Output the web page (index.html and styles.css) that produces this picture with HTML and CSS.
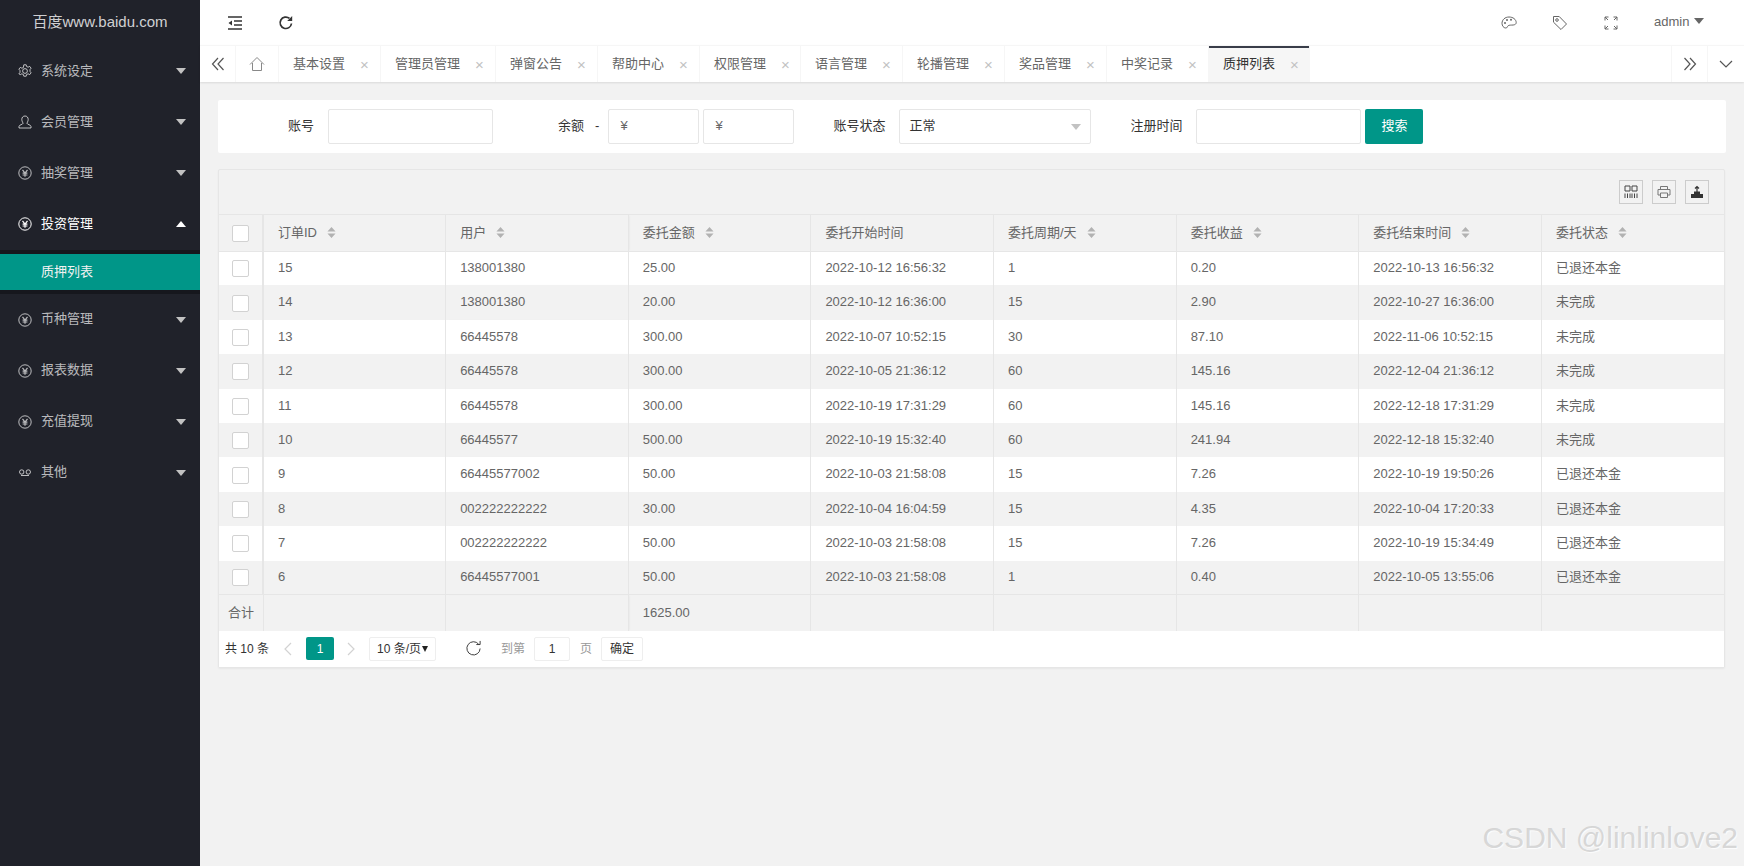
FILE: index.html
```html
<!DOCTYPE html>
<html lang="zh-CN">
<head>
<meta charset="utf-8">
<title>质押列表</title>
<link rel="stylesheet" href="styles.css">
</head>
<body>
<svg class="defs" width="0" height="0" aria-hidden="true">
  <symbol id="i-rmb" viewBox="0 0 14 14">
    <circle cx="7" cy="7" r="6.2" fill="none" stroke="currentColor" stroke-width="1"/>
    <path d="M4.5 3.8 7 7l2.5-3.2M4.6 7.2h4.8M4.6 9h4.8M7 7v3.8" fill="none" stroke="currentColor" stroke-width="1.2"/>
  </symbol>
  <symbol id="i-sort" viewBox="0 0 10 14"><path d="M5 1 9.5 6H.5zM5 13 .5 8h9z" fill="#b2b2b2"/></symbol>
</svg>
<div class="app">
  <aside class="side">
    <div class="logo">百度www.baidu.com</div>
    <nav class="nav">
      <a class="nav-item"><svg class="nav-ic" viewBox="0 0 14 14"><circle cx="7" cy="7" r="2.4" fill="none" stroke="currentColor"/><path d="M5.8.8h2.4l.4 1.7 1.5.7 1.6-.8 1.4 1.8-1.1 1.4v1.8l1.1 1.4-1.4 1.8-1.6-.8-1.5.7-.4 1.7H5.800l-.4-1.700-1.500-.7-1.600.8L.9 9.800 2 8.400V6.600L.9 5.200l1.400-1.800 1.600.8 1.500-.7z" fill="none" stroke="currentColor"/></svg><span>系统设定</span><i class="caret"></i></a>
      <a class="nav-item"><svg class="nav-ic" viewBox="0 0 14 14"><path d="M7 1c-2 0-3.200 1.500-3.200 3.400S5 7.700 5 8.400c0 1-4 1.400-4 3.100V13h12v-1.500c0-1.700-4-2.100-4-3.100 0-.7 1.200-2.100 1.200-4S9 1 7 1z" fill="none" stroke="currentColor"/></svg><span>会员管理</span><i class="caret"></i></a>
      <a class="nav-item"><svg class="nav-ic"><use href="#i-rmb"/></svg><span>抽奖管理</span><i class="caret"></i></a>
      <a class="nav-item open"><svg class="nav-ic"><use href="#i-rmb"/></svg><span>投资管理</span><i class="caret up"></i></a>
      <div class="sub"><a class="sub-item">质押列表</a></div>
      <a class="nav-item"><svg class="nav-ic"><use href="#i-rmb"/></svg><span>币种管理</span><i class="caret"></i></a>
      <a class="nav-item"><svg class="nav-ic"><use href="#i-rmb"/></svg><span>报表数据</span><i class="caret"></i></a>
      <a class="nav-item"><svg class="nav-ic"><use href="#i-rmb"/></svg><span>充值提现</span><i class="caret"></i></a>
      <a class="nav-item"><svg class="nav-ic" viewBox="0 0 14 14"><circle cx="3.700" cy="6" r="2.200" fill="none" stroke="currentColor"/><circle cx="10.300" cy="6" r="2.200" fill="none" stroke="currentColor"/><path d="M3 9.500h8" stroke="currentColor"/></svg><span>其他</span><i class="caret"></i></a>
    </nav>
  </aside>
  <main class="main">
    <header class="top">
      <div class="top-group">
        <span class="top-btn"><svg class="ic-16" viewBox="0 0 16 16"><path d="M1 2h14M7 6h8M7 10h8M1 14h14" fill="none" stroke="#333" stroke-width="1.300"/><path d="M5 5.500 1.500 8 5 10.500z" fill="#333"/></svg></span>
        <span class="top-btn"><svg class="ic-16" viewBox="0 0 16 16"><path d="M13.500 8.500A5.700 5.700 0 1 1 11.500 3.400" fill="none" stroke="#333" stroke-width="1.700"/><path d="M14.200 1v5h-5z" fill="#333"/></svg></span>
      </div>
      <div class="top-group">
        <span class="top-btn"><svg class="ic-16" viewBox="0 0 16 16"><path d="M8 2C4 2 1 4.800 1 8.300c0 2.400 1.500 4.700 3.800 4.700 1.600 0 1.400-1.500 2.400-2.300 1-.8 3-.5 5-.7 1.800-.2 3-1 3-2.400C15.200 4.400 12 2 8 2z" fill="none" stroke="#666"/><circle cx="4" cy="8" r="1" fill="#666"/><circle cx="6" cy="5" r="1" fill="#666"/><circle cx="10" cy="4.800" r="1" fill="#666"/></svg></span>
        <span class="top-btn"><svg class="ic-16" viewBox="0 0 16 16"><path d="M1.500 1.500h5.700l7.300 7.500-5.500 5.500L1.500 7.200z" fill="none" stroke="#666"/><circle cx="5" cy="5" r="1.300" fill="none" stroke="#666"/></svg></span>
        <span class="top-btn"><svg class="ic-16" viewBox="0 0 16 16"><path d="M2 5.500V2h3.500M10.500 2H14v3.500M2 10.500V14h3.500M14 10.500V14h-3.500M2 2l3 3M14 2l-3 3M2 14l3-3M14 14l-3-3" fill="none" stroke="#666"/></svg></span>
        <span class="user">admin<i class="caret dark"></i></span>
      </div>
    </header>
    <div class="tabs">
      <span class="tab-ctl w35"><svg class="ic-14" viewBox="0 0 14 14"><path d="M7 1 1.500 7 7 13M12.500 1 7 7l5.500 6" fill="none" stroke="#555" stroke-width="1.200"/></svg></span>
      <span class="tab-ctl w43"><svg class="ic-16" viewBox="0 0 16 16"><path d="M1 8.500 8 1.500l7 7M3.500 7v7.500h9V7" fill="none" stroke="#888"/></svg></span>
      <span class="tab w102">基本设置<i class="x">×</i></span>
      <span class="tab w115">管理员管理<i class="x">×</i></span>
      <span class="tab w102">弹窗公告<i class="x">×</i></span>
      <span class="tab w102">帮助中心<i class="x">×</i></span>
      <span class="tab w101">权限管理<i class="x">×</i></span>
      <span class="tab w102">语言管理<i class="x">×</i></span>
      <span class="tab w102">轮播管理<i class="x">×</i></span>
      <span class="tab w102">奖品管理<i class="x">×</i></span>
      <span class="tab w102">中奖记录<i class="x">×</i></span>
      <span class="tab w101 active">质押列表<i class="x">×</i></span>
      <span class="tab-fill"></span>
      <span class="tab-ctl w37 bl"><svg class="ic-14" viewBox="0 0 14 14"><path d="M1.500 1 7 7l-5.500 6M7 1l5.500 6L7 13" fill="none" stroke="#555" stroke-width="1.200"/></svg></span>
      <span class="tab-ctl w36"><svg class="ic-14" viewBox="0 0 14 14"><path d="M1 4l6 6 6-6" fill="none" stroke="#555" stroke-width="1.200"/></svg></span>
    </div>
    <div class="content">
      <form class="search">
        <label class="lbl l-acct">账号</label><span class="inp w165"></span>
        <label class="lbl l-bal">余额</label><span class="dash">-</span>
        <span class="inp w91 yen">¥</span><span class="inp w91 yen g4">¥</span>
        <label class="lbl l-stat">账号状态</label>
        <span class="inp sel">正常<i class="caret grey"></i></span>
        <label class="lbl l-reg">注册时间</label><span class="inp w165"></span>
        <span class="btn">搜索</span>
      </form>
      <section class="card">
        <div class="toolbar">
          <span class="tool"><svg class="ic-14" viewBox="0 0 14 14"><path d="M1 1h5v5H1zM8 1h5v5H8zM1 8.500V13M3.500 8.500V13M6 8.500V13M8 8.500V13M10.500 8.500V13M13 8.500V13" fill="none" stroke="#444"/></svg></span>
          <span class="tool"><svg class="ic-14" viewBox="0 0 14 14"><path d="M3.500 4V1.500h7V4M3.500 10H1V4.500h12V10h-2.500M3.500 8h7v4.500h-7z" fill="none" stroke="#777"/></svg></span>
          <span class="tool"><svg class="ic-14" viewBox="0 0 14 14"><path d="M1 9h12v4H1zM4 6.500h6V9H4z" fill="#333"/><path d="M7 7V1.800M5 3.500l2-2 2 2" fill="none" stroke="#333" stroke-width="1.200"/></svg></span>
        </div>
        <table class="grid">
          <colgroup><col class="c-chk"><col span="8"></colgroup>
          <thead><tr>
            <th class="chk"><i class="box"></i></th>
            <th>订单ID<svg class="sort"><use href="#i-sort"/></svg></th>
            <th class="shade">用户<svg class="sort"><use href="#i-sort"/></svg></th>
            <th>委托金额<svg class="sort"><use href="#i-sort"/></svg></th>
            <th>委托开始时间</th>
            <th>委托周期/天<svg class="sort"><use href="#i-sort"/></svg></th>
            <th>委托收益<svg class="sort"><use href="#i-sort"/></svg></th>
            <th>委托结束时间<svg class="sort"><use href="#i-sort"/></svg></th>
            <th>委托状态<svg class="sort"><use href="#i-sort"/></svg></th>
          </tr></thead>
          <tbody>
            <tr><td class="chk"><i class="box"></i></td><td>15</td><td class="shade">138001380</td><td>25.00</td><td>2022-10-12 16:56:32</td><td>1</td><td>0.20</td><td>2022-10-13 16:56:32</td><td>已退还本金</td></tr>
            <tr><td class="chk"><i class="box"></i></td><td>14</td><td class="shade">138001380</td><td>20.00</td><td>2022-10-12 16:36:00</td><td>15</td><td>2.90</td><td>2022-10-27 16:36:00</td><td>未完成</td></tr>
            <tr><td class="chk"><i class="box"></i></td><td>13</td><td class="shade">66445578</td><td>300.00</td><td>2022-10-07 10:52:15</td><td>30</td><td>87.10</td><td>2022-11-06 10:52:15</td><td>未完成</td></tr>
            <tr><td class="chk"><i class="box"></i></td><td>12</td><td class="shade">66445578</td><td>300.00</td><td>2022-10-05 21:36:12</td><td>60</td><td>145.16</td><td>2022-12-04 21:36:12</td><td>未完成</td></tr>
            <tr><td class="chk"><i class="box"></i></td><td>11</td><td class="shade">66445578</td><td>300.00</td><td>2022-10-19 17:31:29</td><td>60</td><td>145.16</td><td>2022-12-18 17:31:29</td><td>未完成</td></tr>
            <tr><td class="chk"><i class="box"></i></td><td>10</td><td class="shade">66445577</td><td>500.00</td><td>2022-10-19 15:32:40</td><td>60</td><td>241.94</td><td>2022-12-18 15:32:40</td><td>未完成</td></tr>
            <tr><td class="chk"><i class="box"></i></td><td>9</td><td class="shade">66445577002</td><td>50.00</td><td>2022-10-03 21:58:08</td><td>15</td><td>7.26</td><td>2022-10-19 19:50:26</td><td>已退还本金</td></tr>
            <tr><td class="chk"><i class="box"></i></td><td>8</td><td class="shade">002222222222</td><td>30.00</td><td>2022-10-04 16:04:59</td><td>15</td><td>4.35</td><td>2022-10-04 17:20:33</td><td>已退还本金</td></tr>
            <tr><td class="chk"><i class="box"></i></td><td>7</td><td class="shade">002222222222</td><td>50.00</td><td>2022-10-03 21:58:08</td><td>15</td><td>7.26</td><td>2022-10-19 15:34:49</td><td>已退还本金</td></tr>
            <tr><td class="chk"><i class="box"></i></td><td>6</td><td class="shade">66445577001</td><td>50.00</td><td>2022-10-03 21:58:08</td><td>1</td><td>0.40</td><td>2022-10-05 13:55:06</td><td>已退还本金</td></tr>
          </tbody>
          <tfoot><tr><td class="sum">合计</td><td></td><td class="shade"></td><td>1625.00</td><td></td><td></td><td></td><td></td><td></td></tr></tfoot>
        </table>
        <div class="pager">
          <span class="count">共 10 条</span>
          <svg class="arrow" viewBox="0 0 10 14"><path d="M8 1 2 7l6 6" fill="none" stroke="#d2d2d2" stroke-width="1.200"/></svg>
          <span class="cur">1</span>
          <svg class="arrow" viewBox="0 0 10 14"><path d="m2 1 6 6-6 6" fill="none" stroke="#d2d2d2" stroke-width="1.200"/></svg>
          <span class="limit">10 条/页<i class="caret black"></i></span>
          <svg class="reload" viewBox="0 0 18 18"><path d="M14.500 4.500A7 7 0 1 0 16 9" fill="none" stroke="#333"/><path d="M12 4.800h4V1" fill="none" stroke="#333"/></svg>
          <span class="muted goto">到第</span><span class="jump">1</span><span class="muted page">页</span><span class="ok">确定</span>
        </div>
      </section>
    </div>
  </main>
  <div class="mark">CSDN @linlinlove2</div>
</div>
</body>
</html>
```

FILE: styles.css
```css
* { box-sizing: border-box; }
html, body { margin: 0; height: 100%; overflow: hidden; }
body { font: 13px/1.4 "Liberation Sans", "Noto Sans CJK SC", sans-serif; color: #666; background: #f2f2f2; }
i { font-style: normal; }
.defs { position: absolute; }
.app { display: grid; grid-template-columns: 200px 1fr; height: 866px; position: relative; }

.side { background: #20222a; color: rgba(255,255,255,.7); }
.logo { height: 45.500px; line-height: 44px; text-align: center; font-size: 15px; color: rgba(255,255,255,.8); }
.nav-item { display: flex; align-items: center; height: 51px; padding-left: 18px; padding-right: 14px; }
.nav-item span { flex: 1; margin-left: 9px; }
.nav-item.open { color: #fff; }
.nav-ic { width: 14px; height: 14px; }
.caret { width: 0; height: 0; border: 5.500px solid transparent; border-top: 6px solid #c2c2c2; border-bottom: 0; display: inline-block; }
.caret.up { border-top: 0; border-bottom: 6px solid #fff; }
.caret.dark { border-top-color: #666; margin-left: 5px; vertical-align: 2px; }
.caret.grey { border-top-color: #c2c2c2; }
.caret.black { border: 3.500px solid transparent; border-top: 6px solid #222; border-bottom: 0; }
.sub { background: rgba(0,0,0,.3); padding: 4px 0; }
.sub-item { display: block; height: 36.500px; line-height: 36px; padding-left: 41px; background: #009688; color: #f2f2f2; }

.main { min-width: 0; display: flex; flex-direction: column; }
.top { height: 45px; background: #fff; display: flex; justify-content: space-between; padding-left: 9px; }
.top-group { display: flex; align-items: center; }
.top-btn { width: 51px; display: flex; justify-content: center; }
.ic-16 { width: 16px; height: 16px; }
.ic-14 { width: 14px; height: 14px; }
.user { width: 108px; padding-left: 18px; }

.tabs { height: 37px; background: #fff; display: flex; border-top: 1px solid #f6f6f6; box-shadow: 0 1px 2px rgba(0,0,0,.1); position: relative; }
.tab-ctl { display: flex; align-items: center; justify-content: center; border-right: 1px solid #f6f6f6; flex: none; }
.tab-ctl.bl { border-left: 1px solid #f6f6f6; }
.tab-ctl:last-child { border-right: 0; }
.w35 { width: 36px; } .w43 { width: 43px; } .w37 { width: 37px; } .w36 { width: 36px; }
.tab { display: flex; align-items: center; flex: none; padding-left: 14px; border-right: 1px solid #f6f6f6; }
.w102 { width: 102px; } .w115 { width: 115px; } .w101 { width: 101px; }
.tab-fill { flex: 1; }
.x { margin-left: 15px; color: #c2c2c2; font-size: 15px; line-height: 1; }
.tab.active { background: #f6f6f6; color: #333; box-shadow: inset 0 2px 0 #393d49; }

.content { flex: 1; padding: 18px 18px 0; }
.search { display: flex; align-items: center; height: 53px; background: #fff; border-radius: 2px; color: #333; }
.lbl { flex: none; }
.l-acct { margin-left: 70px; margin-right: 14px; }
.l-bal { margin-left: 65px; }
.dash { margin: 0 9px 0 11px; }
.l-stat { margin-left: 39px; margin-right: 14px; }
.l-reg { margin-left: 39px; margin-right: 14px; }
.inp { height: 35px; border: 1px solid #e6e6e6; border-radius: 2px; display: flex; align-items: center; position: relative; flex: none; background: #fff; }
.w165 { width: 165px; }
.w91 { width: 91px; }
.g4 { margin-left: 4px; }
.yen { padding-left: 11px; color: #666; }
.sel { width: 192px; padding-left: 9px; font-size: 13px; justify-content: space-between; padding-right: 9px; }
.btn { width: 58px; height: 35px; margin-left: 4px; background: #009688; color: #fff; border-radius: 2px; display: flex; align-items: center; justify-content: center; }

.card { margin-top: 16px; margin-right: 1px; border: 1px solid #e6e6e6; border-radius: 2px; box-shadow: 0 1px 2px rgba(0,0,0,.05); }
.toolbar { height: 45px; border-bottom: 1px solid #e6e6e6; display: flex; justify-content: flex-end; align-items: center; gap: 9px; padding-right: 15px; }
.tool { width: 24px; height: 24px; border: 1px solid #ccc; display: flex; align-items: center; justify-content: center; }
.grid { width: 100%; table-layout: fixed; border-collapse: collapse; }
.c-chk { width: 44px; }
.grid th, .grid td { font-weight: 400; text-align: left; padding: 0 14px; border: 1px solid #e6e6e6; border-width: 0 1px 0 0; white-space: nowrap; }
.grid th:last-child, .grid td:last-child { border-right: 0; }
.grid th { height: 36px; border-bottom: 1px solid #e6e6e6; }
.grid tbody td { height: 34.400px; background: #fff; }
.grid tbody tr:nth-child(even) td { background: #f2f2f2; }
.grid tfoot td { height: 36px; border-top: 1px solid #e6e6e6; }
.grid .chk { padding: 0; text-align: center; border-right-width: 2px; }
.grid .shade { box-shadow: 2px 0 2px -1px rgba(0,0,0,.08); }
.grid .sum { padding: 0 9px; }
.box { display: inline-block; width: 17px; height: 17px; background: #fff; border: 1px solid #d2d2d2; border-radius: 2px; vertical-align: middle; }
.sort { width: 9px; height: 13px; margin-left: 10px; vertical-align: -2px; }

.pager { height: 36px; background: #fff; display: flex; align-items: center; font-size: 12px; color: #333; padding-left: 6px; }
.arrow { width: 10px; height: 14px; margin-left: 14px; }
.arrow + .cur { margin-left: 13px; }
.cur + .arrow { margin-left: 12px; }
.cur { width: 28px; height: 23px; background: #009688; color: #fff; border-radius: 2px; display: flex; align-items: center; justify-content: center; }
.limit { width: 67px; height: 24px; margin-left: 13px; border: 1px solid #eee; border-radius: 2px; display: flex; align-items: center; justify-content: space-between; padding: 0 7px; }
.reload { width: 17px; height: 17px; margin-left: 29px; }
.muted { color: #999; }
.goto { margin-left: 19px; }
.jump { width: 36px; height: 24px; margin-left: 9px; border: 1px solid #eee; border-radius: 2px; display: flex; align-items: center; justify-content: center; }
.page { margin-left: 10px; }
.ok { width: 42px; height: 24px; margin-left: 9px; border: 1px solid #eee; border-radius: 2px; display: flex; align-items: center; justify-content: center; }

.mark { position: absolute; right: 6px; bottom: 13px; font-size: 30px; line-height: 1; color: rgba(200,200,200,.7); text-shadow: 1px 1px 1px rgba(255,255,255,.8); pointer-events: none; }
```
